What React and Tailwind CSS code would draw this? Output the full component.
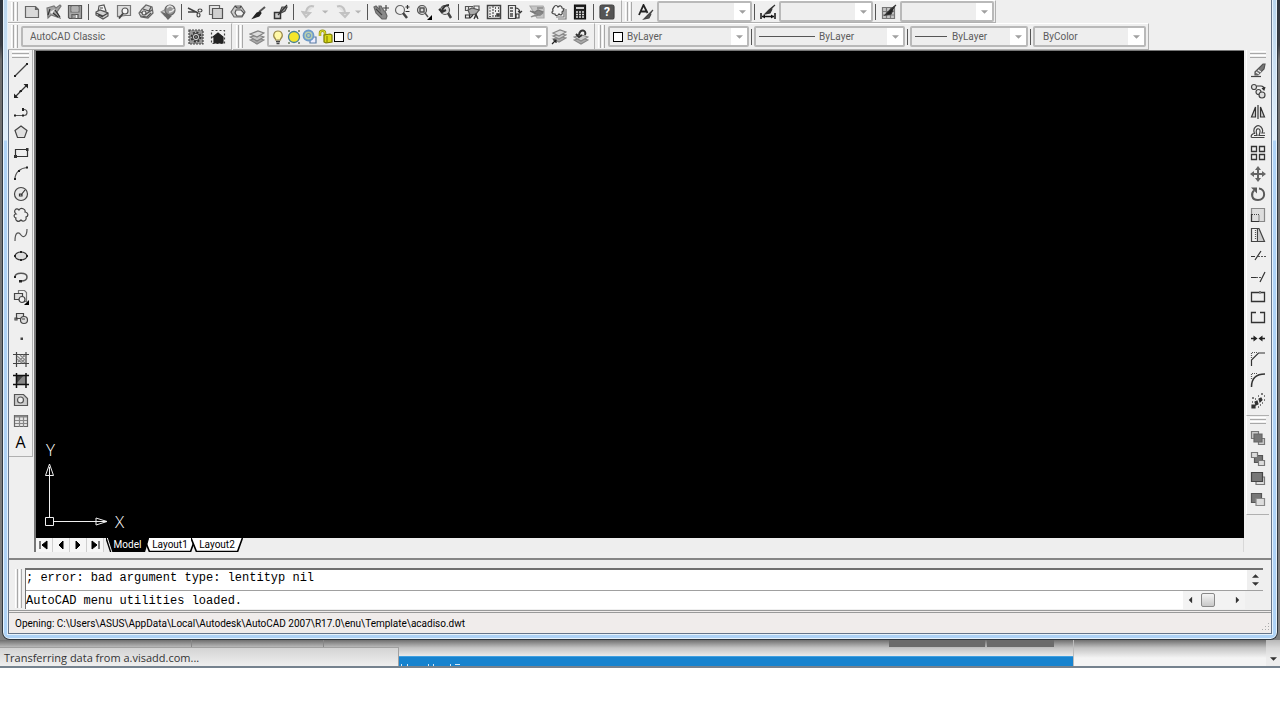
const ICONS = {
  // Standard toolbar
  newFile: <path d="M1.5 2.5h10l3 3v8h-13z M11.5 2.5v3h3" fill="#d9d9d9" stroke="#666" />,
  open: (
    <>
      <path d="M1 4l7-2 2 2 4-3 1 1-4 6 3 6-9-3-3 3z" fill="#a5a5a5" stroke="#777" />
      <path d="M4 5l-2 6M9 6l5 7M12 13l-5-4" stroke="#333" />
      <path d="M4 8l5-3-3 5z" fill="#eee" stroke="none" />
    </>
  ),
  save: (
    <>
      <path d="M1.5 1.5h13v13h-12l-1-1z" fill="#a8a8a8" stroke="#555" />
      <path d="M4 2h8v6H4z" fill="#ededed" stroke="#666" />
      <path d="M5 10.5h6v4H5z" fill="#eee" stroke="#555" />
      <path d="M5 4h6M5 6h6M6 11h2v3H6z" stroke="#777" />
    </>
  ),
  plot: (
    <>
      <path d="M4 8L5 2l5-1 2 6z" fill="#f5f5f5" stroke="#555" />
      <path d="M2 8l4-2 8 3v3l-5 3-7-4z" fill="#d2d2d2" stroke="#555" />
      <path d="M2 9l7 3 5-3M6 4h3M4 11l5 2" stroke="#444" />
    </>
  ),
  preview: (
    <>
      <path d="M1.5 1.5h13v10h-5l-8 1z" fill="#ddd" stroke="#777" />
      <circle cx="9" cy="7" r="3" fill="#f6f6f6" stroke="#555" />
      <path d="M7 9.5l-4 5" stroke="#444" strokeWidth="2" />
    </>
  ),
  publish: (
    <>
      <path d="M4 5l4-4 6 2 1 6-5 5-7-1-2-4z" fill="#d5d5d5" stroke="#666" />
      <path d="M2 8l6 2 6-4M5 5l6 2 2-4M3 12l6 1 4-4" stroke="#555" />
      <circle cx="6" cy="9" r="2" fill="#eee" stroke="#555" />
    </>
  ),
  globe: (
    <>
      <path d="M1 8l7-4v6l-3 2z" fill="#ccc" stroke="#999" />
      <circle cx="10" cy="6" r="5" fill="#999" stroke="#666" />
      <path d="M7 4c2-3 5-2 6 0M9 8c2 0 4-1 5-3" stroke="#e5e5e5" strokeWidth="1.5" />
      <path d="M3 9l8 3-3 3z" fill="#666" stroke="#666" />
    </>
  ),
  cut: (
    <>
      <path d="M1 4l10 5M1 8h9" stroke="#444" strokeWidth="1.5" />
      <ellipse cx="13" cy="6.5" rx="2" ry="1.5" />
      <ellipse cx="11.5" cy="11" rx="1.5" ry="2" />
    </>
  ),
  copyClip: (
    <>
      <path d="M1.5 1.5h10v9h-10z" fill="#e5e5e5" stroke="#666" />
      <path d="M4.5 4.5h10v10h-10z" fill="#d0d0d0" stroke="#555" />
    </>
  ),
  paste: (
    <>
      <path d="M5 2h6l4 6-3 5H4L1 8z" fill="#ccc" stroke="#666" />
      <path d="M6 6h5l3 3-2 3H7L5 9z" fill="#f2f2f2" stroke="#555" />
      <path d="M5 2l2 2h3l1-2" stroke="#444" />
    </>
  ),
  brush: (
    <>
      <path d="M14 3L8 8" stroke="#555" strokeWidth="2" />
      <path d="M9 8L6 9l-4 5 6-2 2-3z" fill="#222" stroke="#222" />
    </>
  ),
  blockEdit: (
    <>
      <path d="M2.5 8.5h6v6h-6z" fill="#ccc" stroke="#333" strokeWidth="1.5" />
      <path d="M8 8l2-5h5l-2 4-4 2" fill="#999" stroke="#444" />
      <path d="M15 1L6 11" stroke="#333" />
    </>
  ),
  undo: <path d="M13 2.5C8 1 5 4 5 10M1.5 8l3.5 5 4-4z" fill="#c2c2c2" fillOpacity="0.3" stroke="#c2c2c2" strokeWidth="2" />,
  redo: <path d="M3 2.5c5-1.5 8 1.5 8 7.5M14.5 9L11 13 7 9z" fill="#c2c2c2" fillOpacity="0.3" stroke="#c2c2c2" strokeWidth="2" />,
  pan: (
    <>
      <path d="M1 3l2-1 4 4-1-4 2 0 3 5 1 0 2 5-1 3H9L3 9z" fill="#8a8a8a" stroke="#666" />
      <path d="M13 1v6M10 4h6M3 5l6 6" stroke="#444" />
    </>
  ),
  zoomRt: (
    <>
      <circle cx="6" cy="6" r="4.5" fill="#eee" stroke="#666" />
      <path d="M9 9l4 5" stroke="#444" strokeWidth="2.5" />
      <path d="M11.5 3h4M13.5 1v4M11.5 7.5h4" stroke="#333" />
    </>
  ),
  zoomWin: (
    <>
      <circle cx="6" cy="6" r="4.5" fill="#ddd" stroke="#555" />
      <path d="M4 4h4v4H4zM9 9l3 4" stroke="#555" strokeWidth="1.5" />
      <path d="M16 11v5h-5z" fill="#000" stroke="none" />
    </>
  ),
  zoomPrev: (
    <>
      <circle cx="8" cy="6" r="4.5" fill="#ddd" stroke="#555" />
      <path d="M11 9l3 5" stroke="#444" strokeWidth="2.5" />
      <path d="M12 1C8 1 6 3 5 7M2 5l3 3 4-2" stroke="#333" strokeWidth="2" />
    </>
  ),
  properties: (
    <>
      <path d="M1 2.5h8M1 6.5h7M1.5 2v5M4.5 2v5M10 2h5v4h-5z" stroke="#555" />
      <path d="M4 6l4-2 7 2-3 4-6 1z" fill="#aaa" stroke="#555" />
      <path d="M1.5 11h4v3h-4zM10 15l2-5 2 5M11 13h3M6 14l3-3" stroke="#333" />
    </>
  ),
  designCenter: (
    <>
      <path d="M1.5 1.5h13v13h-13z" fill="#eee" stroke="#444" strokeWidth="1.5" />
      <path d="M3 4h3M3 7h3M3 10h3M3 12.5h3M7 2v12" stroke="#555" strokeDasharray="2 1" />
      <path d="M9 4h1M12 4h1M9 7h1M9 12h1M11 10h2v2h-2zM12 7h1" stroke="#333" strokeWidth="1.5" />
    </>
  ),
  palettes: (
    <>
      <path d="M1.5 1.5h7v13h-7z" fill="#eee" stroke="#444" />
      <path d="M3 4h3M3 7h3M3 10h3M3 12h3" stroke="#444" strokeWidth="1.5" />
      <path d="M8 4c4 0 5 2 5 5M11 7l2 2 2-2M9 10h3v4H9z" stroke="#333" />
    </>
  ),
  sheetSet: (
    <>
      <path d="M1 2h13l1 2v10H8z" fill="#c5c5c5" stroke="#aaa" />
      <path d="M1 7l5 1 3-2 5 2-3 3-4-1z" fill="#888" stroke="#777" />
      <path d="M2 13c4-3 8 0 12-4M8 4h6" stroke="#888" strokeWidth="1.5" />
    </>
  ),
  markup: (
    <>
      <path d="M5 13h8V4M7 15h8V5" stroke="#777" />
      <path d="M3 3c1-2 3-2 4 0 2-2 4-1 4 1 2 0 2 3 0 4 1 2-1 4-3 2-1 2-4 2-4 0-3 0-4-2-2-3-1-2 0-3 1-4z" fill="#f4f4f4" stroke="#444" />
    </>
  ),
  calc: (
    <>
      <path d="M2.5 1h11v14h-11z" fill="#222" stroke="#111" />
      <path d="M4 4h8" stroke="#ccc" strokeWidth="2" />
      <path d="M4 8h8M4 10.5h8M4 13h8" stroke="#ddd" strokeWidth="1.3" strokeDasharray="2 1" />
    </>
  ),
  help: <rect x="1" y="1" width="14" height="14" rx="2" fill="#555" stroke="#444" />,
  textStyle: (
    <>
      <path d="M1 11L5.5 1l4 8M3 7.5h5" stroke="#222" strokeWidth="1.8" />
      <path d="M15 6L9 12l-3 3 5-1 2-4" fill="#555" stroke="#444" />
    </>
  ),
  dimStyle: (
    <>
      <path d="M1 9v6M15 9v6M2 12.5h12" stroke="#111" strokeWidth="1.5" />
      <path d="M5 10.5v4l-3-2zM11 10.5v4l3-2z" fill="#111" stroke="none" />
      <path d="M15 1L9 6l-4 4 5-1 2-4" fill="#333" stroke="#333" />
    </>
  ),
  tableStyle: (
    <>
      <path d="M1.5 3.5h12v11h-12z M1.5 7.5h12M1.5 11h12M5.5 3.5v11M9.5 3.5v11" fill="#c5c5c5" stroke="#777" />
      <path d="M15 1L9 6l-5 5 6-1 2-4" fill="#222" stroke="#333" />
    </>
  ),
  // Workspaces and layers
  gearBox: (
    <>
      <path d="M1 1h14v14H1z" fill="#999" stroke="#444" strokeDasharray="2 1" />
      <circle cx="8" cy="8" r="4.5" fill="#ccc" stroke="#333" strokeWidth="2" strokeDasharray="2 1.5" />
      <circle cx="8" cy="8" r="3.5" fill="#ddd" stroke="#444" />
      <circle cx="8" cy="8" r="1.5" fill="#888" stroke="#333" />
    </>
  ),
  home: (
    <>
      <path d="M1.5 1.5h13v13h-13z" stroke="#444" strokeDasharray="2 2" />
      <path d="M3 8l5-4 5 4v6H4V8z" fill="#222" stroke="#222" />
    </>
  ),
  layers: (
    <>
      <path d="M1 11l8-2 6 2-7 4z" fill="#aaa" stroke="#888" />
      <path d="M1 8l8-2 6 2-7 4z" fill="#c5c5c5" stroke="#808080" />
      <path d="M1 5l8-3 6 2-7 4z" fill="#dcdcdc" stroke="#808080" />
    </>
  ),
  layerCurrent: (
    <>
      <path d="M2 10l7-2 6 1-7 4z" fill="#aaa" stroke="#888" />
      <path d="M2 7l7-2 6 1-7 4z" fill="#ccc" stroke="#888" />
      <path d="M2 4l7-3 6 2-7 4z" fill="#ddd" stroke="#888" />
      <path d="M1 15l4-4M2 11h3v3" stroke="#222" />
    </>
  ),
  layerPrev: (
    <>
      <path d="M1 11l8-2 6 2-7 4z" fill="#aaa" stroke="#888" />
      <path d="M1 8l8-2 6 2-7 4z" fill="#ccc" stroke="#888" />
      <path d="M12 6c2-5-5-7-6 0M3 5l3 3 3-2" stroke="#333" strokeWidth="2" />
    </>
  ),
  bulb: (
    <>
      <path d="M5.5 10C2 7 4 2 8 2s6 5 2.5 8v1h-5z" fill="#fff8a8" stroke="#9a8a4a" />
      <path d="M6 12.5h4M6.5 14.5h3" stroke="#444" strokeWidth="1.5" />
    </>
  ),
  sun: (
    <>
      <path d="M2 2h2M12 2h2M2 14h2M12 14h2" stroke="#6a7a5a" strokeWidth="1.5" />
      <circle cx="8" cy="8" r="5.5" fill="#f5e62a" stroke="#4a8296" strokeWidth="1.3" />
    </>
  ),
  freeze: (
    <>
      <path d="M8 8h6v6H8z" fill="#eef" stroke="#5a7da5" />
      <circle cx="6.5" cy="6.5" r="5" fill="#b8cfae" stroke="#6c9acb" strokeWidth="1.8" />
      <circle cx="6.5" cy="6.5" r="2" stroke="#6c9acb" />
    </>
  ),
  lock: (
    <>
      <path d="M2 7V4c0-3 5-3 5 0v3" stroke="#8a8a10" strokeWidth="2.5" />
      <path d="M2 7V4c0-3 5-3 5 0v3" stroke="#e0e030" />
      <path d="M6 6l6-1 2 1v7l-6 1-2-1z" fill="#dada1a" stroke="#7a7a00" />
      <path d="M9 7v7" stroke="#8a8a00" />
    </>
  ),
  // Draw
  line: (
    <>
      <path d="M2 14L14 2" stroke="#444" />
      <path d="M1 13h2v2H1zM13 1h2v2h-2z" fill="#222" stroke="none" />
    </>
  ),
  xline: (
    <>
      <path d="M2 14L14 2" stroke="#333" />
      <path d="M1 10.5V15h4.5zM15 5.5V1h-4.5zM6 9h3V7H7z" fill="#222" stroke="none" />
    </>
  ),
  pline: (
    <>
      <path d="M2 11.5h9c4 0 4-6 0-6" stroke="#555" />
      <path d="M1 10.5h2v2H1zM9 10.5h2v2H9zM9 4h2v3H9z" fill="#222" stroke="none" />
    </>
  ),
  polygon: <path d="M8 2l6 4.5-2.5 7h-7l-2.5-7z" fill="#e0e0e0" stroke="#444" />,
  rect: (
    <>
      <path d="M2.5 4.5h12v7h-12z" fill="#eee" stroke="#333" />
      <path d="M1 10h3v3H1zM13 3h2.5v3H13z" fill="#333" stroke="none" />
    </>
  ),
  arc: (
    <>
      <path d="M2 14C2 8 7 3 14 2.5" stroke="#555" />
      <path d="M1 13h2v2H1zM5 5h2v2H5zM13 1.5h2v2h-2z" fill="#222" stroke="none" />
    </>
  ),
  circle: (
    <>
      <circle cx="8" cy="8" r="6.5" fill="#e6e6e6" stroke="#444" />
      <path d="M8 9l4-5M6.5 8H9v2H6.5z" stroke="#333" />
    </>
  ),
  revcloud: (
    <path d="M3 7C0 4 3 0 6 3c2-3 7-1 6 2 3 0 4 4 1 5 1 4-3 5-5 3-3 3-6 0-5-2-3-1-2-4 0-4z" fill="#eee" stroke="#444" />
  ),
  spline: <path d="M2 14C2 4 6 5 8 8s6 2 6-6" stroke="#555" />,
  ellipse: (
    <>
      <ellipse cx="8" cy="8" rx="6" ry="4" fill="#ddd" stroke="#333" />
      <path d="M1 8h2M13 8h2M8 3v2M8 11v2" stroke="#222" strokeWidth="2" />
    </>
  ),
  ellipseArc: (
    <>
      <path d="M2 8c0-5 12-5 12 0 0 3-3 4-6 4" stroke="#555" strokeWidth="1.5" />
      <path d="M1 7h2v2H1zM6 11h3v2.5H6z" fill="#222" stroke="none" />
    </>
  ),
  insertBlock: (
    <>
      <path d="M5.5 4V1.5h6l2 2v9H11" fill="#eee" stroke="#777" />
      <path d="M1.5 4.5h8v6h-8z" fill="#ddd" stroke="#444" />
      <circle cx="9" cy="10.5" r="3" fill="#eee" stroke="#444" />
      <path d="M16 11v5h-5z" fill="#000" stroke="none" />
    </>
  ),
  makeBlock: (
    <>
      <path d="M3.5 3.5h7v5h-7z" fill="#ddd" stroke="#444" />
      <circle cx="11" cy="10" r="3.5" fill="#ddd" stroke="#444" />
      <path d="M2 8h2v2H2zM9 9h3" stroke="#444" />
    </>
  ),
  point: <path d="M7.5 7.5H10V10H7.5z" fill="#444" stroke="none" />,
  hatch: (
    <>
      <path d="M0 3.5h16M0 12.5h16M3.5 1v15M13 1v15" stroke="#444" />
      <path d="M4 5l8 7M4 8l5 4M7 4l5 5M10 4l3 2M5 11l6-6M8 12l4-4" stroke="#888" />
    </>
  ),
  gradient: (
    <>
      <path d="M3 3h10v10H3z" fill="#888" stroke="none" />
      <path d="M3 3h8L3 12z" fill="#444" stroke="none" />
      <path d="M0 3.5h16M0 12.5h16M3.5 1v15M13 1v15" stroke="#111" strokeWidth="1.5" />
    </>
  ),
  region: (
    <>
      <path d="M1.5 2.5h9l4 4v7h-13z" fill="#ccc" stroke="#555" />
      <circle cx="7.5" cy="8" r="3" fill="#eee" stroke="#555" />
    </>
  ),
  table: (
    <>
      <path d="M1.5 2.5h13v11h-13z" fill="#e4e4e4" stroke="#666" />
      <path d="M2 3.5h12" stroke="#888" strokeWidth="2" />
      <path d="M2 7.5h12M2 10.5h12M6.5 4v10M10.5 4v10" stroke="#888" />
    </>
  ),
  // Modify
  erase: (
    <>
      <path d="M1 14.5h10" stroke="#444" />
      <path d="M5 10l8-8 2 0-1 5-6 6-3 0z" fill="#777" stroke="#555" />
      <path d="M6 10l3 2M8 8l3 2" stroke="#eee" />
    </>
  ),
  copy: (
    <>
      <circle cx="4" cy="4" r="2.5" fill="#e5e5e5" />
      <circle cx="8.5" cy="9" r="2.5" fill="#e5e5e5" />
      <circle cx="12" cy="12" r="3" fill="#ddd" />
      <path d="M7 3h4c2 0 3 1 3 3M12 5l2 2 1-3" stroke="#333" />
    </>
  ),
  mirror: (
    <>
      <path d="M5.5 3v10h-4zM10.5 3v10h4z" fill="#ccc" stroke="#333" />
      <path d="M8 1v14" stroke="#333" />
    </>
  ),
  offset: (
    <>
      <path d="M1.5 13.5h13M1.5 13.5c-1-2 1-4 3-4C2 3 8 0 11 3c2 2 2 4 1 6h3" stroke="#444" />
      <path d="M4 11.5h3C5 6 7 4 9 5c2 1 1 4 0 6.5h6" stroke="#444" />
    </>
  ),
  array: <path d="M1.5 1.5h5v5h-5zM9.5 1.5h5v5h-5zM1.5 9.5h5v5h-5zM9.5 9.5h5v5h-5z" fill="#eee" stroke="#333" strokeWidth="1.3" />,
  move: (
    <>
      <path d="M8 3v10M3 8h10" stroke="#666" strokeWidth="2" />
      <path d="M8 0l3 4H5zM8 16l3-4H5zM0 8l4-3v6zM16 8l-4-3v6z" fill="#666" stroke="none" />
    </>
  ),
  rotate: (
    <>
      <path d="M9 2.5c7 1 7 11.5-1 11.5-7 0-7-7-4-9.5" stroke="#5a5a5a" strokeWidth="2" />
      <path d="M1 1.5h6v6z" fill="#5a5a5a" stroke="none" />
    </>
  ),
  scale: (
    <>
      <path d="M1.5 1.5h13v13h-13z" fill="#ddd" stroke="#888" />
      <path d="M2 7.5h7v7" stroke="#444" strokeDasharray="1 1" />
      <path d="M1.5 7v7.5H9" stroke="#333" />
    </>
  ),
  stretch: (
    <>
      <path d="M1.5 1.5h6v13h-6z" stroke="#444" />
      <path d="M8 1.5h1l5.5 13H8" fill="#ccc" stroke="#444" />
      <path d="M5.5 3v10" stroke="#555" strokeDasharray="1 1" />
    </>
  ),
  trim: (
    <>
      <path d="M1 8.5h4M5 12l6-9" stroke="#333" />
      <path d="M8 8.5h8" stroke="#555" strokeDasharray="2 1" />
    </>
  ),
  extend: (
    <>
      <path d="M1 8.5h5M10 13l5-10" stroke="#333" />
      <path d="M6 8.5h5" stroke="#555" strokeDasharray="2 1" />
    </>
  ),
  breakPoint: (
    <>
      <path d="M1.5 3.5h13v9h-13z" fill="#eee" stroke="#333" strokeWidth="1.3" />
      <path d="M9 2h2v2.5H9z" fill="#777" stroke="none" />
    </>
  ),
  breakObj: <path d="M4.5 2.5h-3v10h13v-10h-3M4 2.5h2M10 2.5h2" stroke="#333" strokeWidth="1.3" />,
  join: (
    <>
      <path d="M1 7.5h4M11 7.5h4" stroke="#222" strokeWidth="1.5" />
      <path d="M3.5 4.5l4 3-4 3zM12.5 4.5l-4 3 4 3z" fill="#222" stroke="none" />
    </>
  ),
  chamfer: (
    <>
      <path d="M1.5 15V9l7-7H15" stroke="#333" />
      <path d="M1.5 7V1.5H7" stroke="#555" strokeDasharray="1 1" />
    </>
  ),
  fillet: (
    <>
      <path d="M1.5 15C1.5 6 6 2 15 2" stroke="#333" strokeWidth="1.5" />
      <path d="M1.5 7V1.5H7" stroke="#555" strokeDasharray="1 1" />
    </>
  ),
  explode: (
    <>
      <path d="M2 12h3v3H2zM5 9l2-1 1 3-2 1zM9 6l2-1 1 2-2 2z" fill="#333" stroke="#333" />
      <path d="M2 5h2M5 6h1M8 3h1M11 1h2M14 3h1M14 7h1M10 12h1M12 10h1M2 9h1M8 14h1" stroke="#555" strokeWidth="1.5" />
    </>
  ),
  front: (
    <>
      <path d="M1.5 1.5h7v7h-7zM8.5 8.5h6v6h-6z" fill="#ccc" stroke="#777" />
      <path d="M4 4h8v8H4z" fill="#777" stroke="#666" />
    </>
  ),
  back: (
    <>
      <path d="M4.5 4.5h8v7h-8z" fill="#777" stroke="#555" />
      <path d="M1.5 1.5h6v5h-6zM8.5 9.5h6v5h-6z" fill="#ddd" stroke="#777" />
    </>
  ),
  above: (
    <>
      <path d="M6 6h8.5v7.5H6z" fill="#ddd" stroke="#777" />
      <path d="M1.5 1.5h11v9h-11z" fill="#777" stroke="#444" />
    </>
  ),
  under: (
    <>
      <path d="M1.5 1.5h10v9h-10z" fill="#777" stroke="#555" />
      <path d="M6 6.5h8.5v7H6z" fill="#ddd" stroke="#888" />
    </>
  ),
};

const DRAW_TOOLS = [
  'line', 'xline', 'pline', 'polygon', 'rect', 'arc', 'circle', 'revcloud', 'spline', 'ellipse',
  'ellipseArc', 'insertBlock', 'makeBlock', 'point', 'hatch', 'gradient', 'region', 'table', 'mtext',
];

const MODIFY_TOOLS = [
  'erase', 'copy', 'mirror', 'offset', 'array', 'move', 'rotate', 'scale', 'stretch',
  'trim', 'extend', 'breakPoint', 'breakObj', 'join', 'chamfer', 'fillet', 'explode',
];

const ORDER_TOOLS = ['front', 'back', 'above', 'under'];

function Icon({ name }) {
  return (
    <svg viewBox="0 0 16 16" className="w-4 h-4 shrink-0" fill="none" stroke="#444" strokeWidth="1.2" aria-hidden="true">
      {ICONS[name]}
    </svg>
  );
}

function ToolButton({ name, className = 'flex-1' }) {
  return (
    <button aria-label={name} className={`relative flex items-center justify-center ${className}`}>
      {name === 'mtext' ? <span className="text-base leading-4 text-black font-['Open_Sans',sans-serif]">A</span> : <Icon name={name} />}
      {name === 'help' && (
        <span className="absolute inset-0 flex items-center justify-center text-xs font-bold text-white">?</span>
      )}
    </button>
  );
}

function Group({ tools, className }) {
  return (
    <div className={`flex self-stretch ${className}`}>
      {tools.map((t) => (
        <ToolButton key={t} name={t} />
      ))}
    </div>
  );
}

function Sep() {
  return <div className="w-px h-4 mx-[2px] bg-[#555] shrink-0" />;
}

function Grip() {
  return (
    <div className="flex gap-px self-stretch py-px mx-[3px] shrink-0">
      <div className="w-[3px] border-l border-white border-r border-r-[#a8a8a8]" />
      <div className="w-[3px] border-l border-white border-r border-r-[#a8a8a8]" />
    </div>
  );
}

function GripH() {
  return (
    <div className="flex flex-col gap-px px-[3px] pt-px shrink-0">
      <div className="h-[3px] border-t border-white border-b border-b-[#a8a8a8]" />
      <div className="h-[3px] border-t border-white border-b border-b-[#a8a8a8]" />
    </div>
  );
}

function Down({ className = '' }) {
  return (
    <svg viewBox="0 0 8 4" className={`w-[7px] h-1 ${className}`} fill="currentColor" aria-hidden="true">
      <path d="M0 0h8L4 4z" />
    </svg>
  );
}

function Combo({ label, value = '', className, pad = 'pl-2', children }) {
  return (
    <div className={`relative h-[21px] shrink-0 ${className}`}>
      <select
        aria-label={label}
        className={`block w-full h-full appearance-none rounded-[2px] border-2 border-[#b9b9b9] bg-[#eeeeee] text-[10px] leading-4 text-[#5c5c5c] ${pad}`}
      >
        <option>{value}</option>
      </select>
      <div className="absolute inset-y-[2px] right-[2px] w-4 bg-white flex items-center justify-center text-[#a0a0a0] pointer-events-none">
        <Down />
      </div>
      {children && (
        <div className="absolute inset-y-0 left-[3px] flex items-center pointer-events-none">{children}</div>
      )}
    </div>
  );
}

function Toolbar({ children, className = '' }) {
  return (
    <div className={`flex items-center border-b border-r border-[#b0b0b0] border-t border-t-white shrink-0 ${className}`}>
      <Grip />
      {children}
    </div>
  );
}

function Swatch({ className = '' }) {
  return <span className={`w-[10px] h-[10px] border border-black bg-white ${className}`} />;
}

function TopToolbars() {
  return (
    <div className="bg-[#efefef] shrink-0 -ml-px">
      <div className="flex h-[23px]">
        <Toolbar className="w-[614px]">
          <Group tools={['newFile', 'open', 'save']} className="w-[65px]" />
          <Sep />
          <Group tools={['plot', 'preview', 'publish', 'globe']} className="w-[88px]" />
          <Sep />
          <Group tools={['cut', 'copyClip', 'paste', 'brush', 'blockEdit']} className="w-[107px]" />
          <Sep />
          <div className="flex items-center w-[69px] pl-1 text-[#b5b5b5]">
            <ToolButton name="undo" className="w-5" />
            <Down className="mx-1" />
            <ToolButton name="redo" className="w-5" />
            <Down className="mx-1" />
          </div>
          <Sep />
          <Group tools={['pan', 'zoomRt', 'zoomWin', 'zoomPrev']} className="w-[86px]" />
          <Sep />
          <Group tools={['properties', 'designCenter', 'palettes', 'sheetSet', 'markup', 'calc']} className="w-[130px]" />
          <Sep />
          <Group tools={['help']} className="w-[22px]" />
        </Toolbar>
        <Toolbar className="w-[374px]">
          <ToolButton name="textStyle" className="w-[22px]" />
          <Combo label="Text style" className="w-[95px]" />
          <Sep />
          <ToolButton name="dimStyle" className="w-[22px]" />
          <Combo label="Dimension style" className="w-[94px]" />
          <Sep />
          <ToolButton name="tableStyle" className="w-[22px]" />
          <Combo label="Table style" className="w-[94px]" />
        </Toolbar>
      </div>
      <div className="flex h-[27px]">
        <Toolbar className="w-[224px]">
          <Combo label="Workspace" value="AutoCAD Classic" className="w-[164px]" pad="pl-[7px]" />
          <ToolButton name="gearBox" className="w-[22px]" />
          <ToolButton name="home" className="w-[22px]" />
        </Toolbar>
        <Toolbar className="w-[362px] ml-px">
          <ToolButton name="layers" className="w-[21px]" />
          <Combo label="Layer" value="0" className="w-[281px]" pad="pl-[78px]">
            <Icon name="bulb" />
            <Icon name="sun" />
            <Icon name="freeze" />
            <Icon name="lock" />
            <Swatch />
          </Combo>
          <ToolButton name="layerCurrent" className="w-[22px]" />
          <ToolButton name="layerPrev" className="w-[22px]" />
        </Toolbar>
        <Toolbar className="w-[554px]">
          <Combo label="Color" value="ByLayer" className="w-[141px]" pad="pl-[17px]">
            <Swatch className="ml-[2px]" />
          </Combo>
          <Sep />
          <Combo label="Linetype" value="ByLayer" className="w-[151px]" pad="pl-[63px]">
            <span className="w-14 h-px ml-[2px] bg-[#555]" />
          </Combo>
          <Sep />
          <Combo label="Lineweight" value="ByLayer" className="w-[118px]" pad="pl-[40px]">
            <span className="w-8 h-px ml-[2px] bg-[#555]" />
          </Combo>
          <Sep />
          <Combo label="Plot style" value="ByColor" className="w-[113px]" />
        </Toolbar>
      </div>
    </div>
  );
}

function UcsIcon() {
  return (
    <svg viewBox="0 -16 112 120" className="w-28 h-[120px]" fill="none" stroke="#f0f0f0" aria-hidden="true">
      <path d="M9.5 77.5h8v8h-8zM13.5 77.5V34M17.5 81.5H70" />
      <path d="M13.5 24l-4 11.5h8zM13.5 27v8M71 81.5L60 78v7zM68 81.5h-8" />
      <text x="10" y="16" fontSize="17" fill="#fff" stroke="none" className="font-light font-['Open_Sans',sans-serif]">Y</text>
      <text x="79" y="88" fontSize="17" fill="#fff" stroke="none" className="font-light font-['Open_Sans',sans-serif]">X</text>
    </svg>
  );
}

const NAV = [
  ['First layout', 'M4 3v8M11 3L6 7l5 4z'],
  ['Previous layout', 'M10 3L6 7l4 4z'],
  ['Next layout', 'M6 3l4 4-4 4z'],
  ['Last layout', 'M5 3l5 4-5 4zM12 3v8'],
];

function LayoutTab({ name, active, className }) {
  return (
    <button className={`relative h-full -mr-[5px] text-[10px] leading-[14px] ${active ? 'text-white z-10' : 'text-black'} ${className}`}>
      <svg viewBox="0 0 48 14" preserveAspectRatio="none" className="absolute inset-0 w-full h-full" aria-hidden="true">
        <path d="M0 0l5 13.5h38L47.5 0" fill={active ? '#000' : '#fff'} stroke="#000" strokeWidth="1.5" />
        {active && <path d="M1.5 0l5 14" stroke="#fff" />}
      </svg>
      <span className="relative">{name}</span>
    </button>
  );
}

function LayoutBar() {
  return (
    <div className="flex h-[14px] bg-[#eeeeee] border-r border-[#d8d8d8] shrink-0">
      {NAV.map(([label, d]) => (
        <button key={label} aria-label={label} className="w-[17px] bg-[#f6f6f6] border-r border-[#cfcfcf] flex items-center justify-center">
          <svg viewBox="0 0 16 14" className="w-4 h-[14px]" fill="#000" stroke="#000" aria-hidden="true">
            <path d={d} />
          </svg>
        </button>
      ))}
      <div className="flex ml-[2px]">
        <LayoutTab name="Model" active className="w-[43px]" />
        <LayoutTab name="Layout1" className="w-[52px]" />
        <LayoutTab name="Layout2" className="w-[52px]" />
      </div>
    </div>
  );
}

function CommandLine() {
  return (
    <div className="flex bg-[#efefef] border-t-2 border-[#858585] pt-2 pb-px pl-[3px] pr-2 shrink-0">
      <Grip />
      <div className="flex-1 border-t-2 border-l border-[#707070] font-['Liberation_Mono',monospace] text-xs text-black">
        <div className="flex h-[21px] bg-white border-b border-[#a0a0a0]">
          <p className="flex-1 leading-4">; error: bad argument type: lentityp nil</p>
          <div className="w-4 bg-[#efefef] flex flex-col items-center justify-between py-1 text-[#333]">
            <Down className="rotate-180" />
            <Down />
          </div>
        </div>
        <div className="flex h-[18px] bg-[#efefef]">
          <input
            aria-label="Command"
            defaultValue="AutoCAD menu utilities loaded."
            className="flex-1 min-w-0 pt-[2px] bg-white outline-none"
          />
          <div className="w-[62px] mr-[18px] flex items-center justify-between px-1 text-[#333] bg-[#f3f3f3]">
            <Down className="rotate-90" />
            <span className="w-[14px] h-[14px] mr-3 rounded-[2px] border border-[#888] bg-linear-to-b from-[#f5f5f5] to-[#c8c8c8]" />
            <Down className="-rotate-90" />
          </div>
        </div>
      </div>
    </div>
  );
}

function StatusBar() {
  return (
    <div className="flex items-center justify-between h-[23px] bg-[#f0eceb] border-t-3 border-double border-[#999] pl-[6px] pr-px shrink-0">
      <p className="text-[10px] leading-4 pt-px text-black">
        Opening: C:\Users\ASUS\AppData\Local\Autodesk\AutoCAD 2007\R17.0\enu\Template\acadiso.dwt
      </p>
      <svg viewBox="0 0 9 9" className="w-[9px] h-[9px] self-end mb-[2px]" fill="#aaa" aria-hidden="true">
        <path d="M7 1h1v1h-1zM7 4h1v1h-1zM7 7h1v1h-1zM4 4h1v1h-1zM4 7h1v1h-1zM1 7h1v1h-1z" />
      </svg>
    </div>
  );
}

function CadWindow() {
  return (
    <div className="mx-[2px] border-x border-b border-[#30373f] rounded-b-lg overflow-hidden">
      <div className="border-x border-b border-[#e6f2fc] rounded-b-md px-[3px] pb-[3px] bg-[linear-gradient(#b9d5ee,#dfedf9_140px,#aed2f6_141px)]">
        <div className="border-x border-b border-[#e6f2fc]">
          <div className="flex flex-col h-[634px] border-x border-b border-[#66758a] bg-[#efefef] font-['Roboto','Liberation_Sans',sans-serif]">
            <TopToolbars />
            <div className="flex flex-1 min-h-0">
              <div className="w-[25px] shrink-0 pr-px">
                <div className="flex flex-col h-[407px] border-b border-r border-[#b0b0b0]">
                  <GripH />
                  <div className="flex flex-col flex-1 pt-[2px] pb-1">
                    {DRAW_TOOLS.map((t) => (
                      <ToolButton key={t} name={t} />
                    ))}
                  </div>
                </div>
              </div>
              <div className="flex-1 flex flex-col min-w-0 border-l-2 border-t border-[#777] mb-[6px]">
                <div className="flex-1 bg-black flex flex-col justify-end">
                  {/* the drawing's box reaches past the axes, so the letters are not clipped */}
                  <div className="-mb-[6px]">
                    <UcsIcon />
                  </div>
                </div>
                <LayoutBar />
              </div>
              <div className="w-[27px] shrink-0 pl-[2px] pr-[2px]">
                <div className="flex flex-col h-[366px] border-b border-[#b0b0b0] border-l border-l-white">
                  <GripH />
                  <div className="flex flex-col flex-1 pt-[2px] pb-1">
                    {MODIFY_TOOLS.map((t) => (
                      <ToolButton key={t} name={t} />
                    ))}
                  </div>
                </div>
                <div className="flex flex-col h-[99px] border-b border-[#b0b0b0] border-l border-l-white">
                  <GripH />
                  <div className="flex flex-col flex-1 pt-1 pb-1">
                    {ORDER_TOOLS.map((t) => (
                      <ToolButton key={t} name={t} />
                    ))}
                  </div>
                </div>
              </div>
            </div>
            <CommandLine />
            <StatusBar />
          </div>
        </div>
      </div>
    </div>
  );
}

// The strip of the browser that shows under the window
function BrowserStrip() {
  return (
    <div className="relative flex h-7 border-b-2 border-[#75828e] bg-[linear-gradient(#6f6f6f,#c4c4c4_8px,#f4f4f4_18px)]">
      <div className="w-[399px] flex flex-col">
        <div className="flex h-[7px] shrink-0">
          <div className="w-48 border-r border-[#888]" />
          <div className="w-[132px] border-r border-[#888]" />
        </div>
        <p className="h-[19px] border-t border-r border-[#a0a0a0] bg-linear-to-b from-[#d4d4d4] to-[#efefef] pl-1 text-[11px] leading-5 text-[#333] font-['Open_Sans',sans-serif]">
          Transferring data from a.visadd.com...
        </p>
      </div>
      <div className="flex-1 flex flex-col justify-between">
        <div className="flex justify-end gap-[2px] h-[7px] pr-[19px]">
          <div className="w-24 bg-[#6b6b6b]" />
          <div className="w-[67px] bg-[#6b6b6b]" />
        </div>
        <div className="h-[10px] bg-[#1683cf] border-t border-[#3f9fe0]">
          <svg viewBox="0 0 64 10" className="w-16 h-[10px]" fill="#d5e8f6" aria-hidden="true">
            <path d="M2 7h1v2H2zM8 7h1v2H8zM29 7h1v2h-1zM34 7h1v2h-1zM51 7h1v2h-1zM56 7h5v1h-5z" />
          </svg>
        </div>
      </div>
      <div className="w-[193px] border-l border-[#bbb]" />
      <div className="w-[14px] bg-[#e8e8e8]/60 flex items-end justify-center pb-[5px] text-[#333]">
        <Down />
      </div>
    </div>
  );
}

export default function App() {
  return (
    <div className="min-h-screen bg-white font-['Liberation_Sans',Arial,sans-serif]">
      <div className="bg-[linear-gradient(#2f3640,#3b3f46_45px,#6e6e6e_60px,#808080)]">
        <CadWindow />
      </div>
      <BrowserStrip />
    </div>
  );
}
